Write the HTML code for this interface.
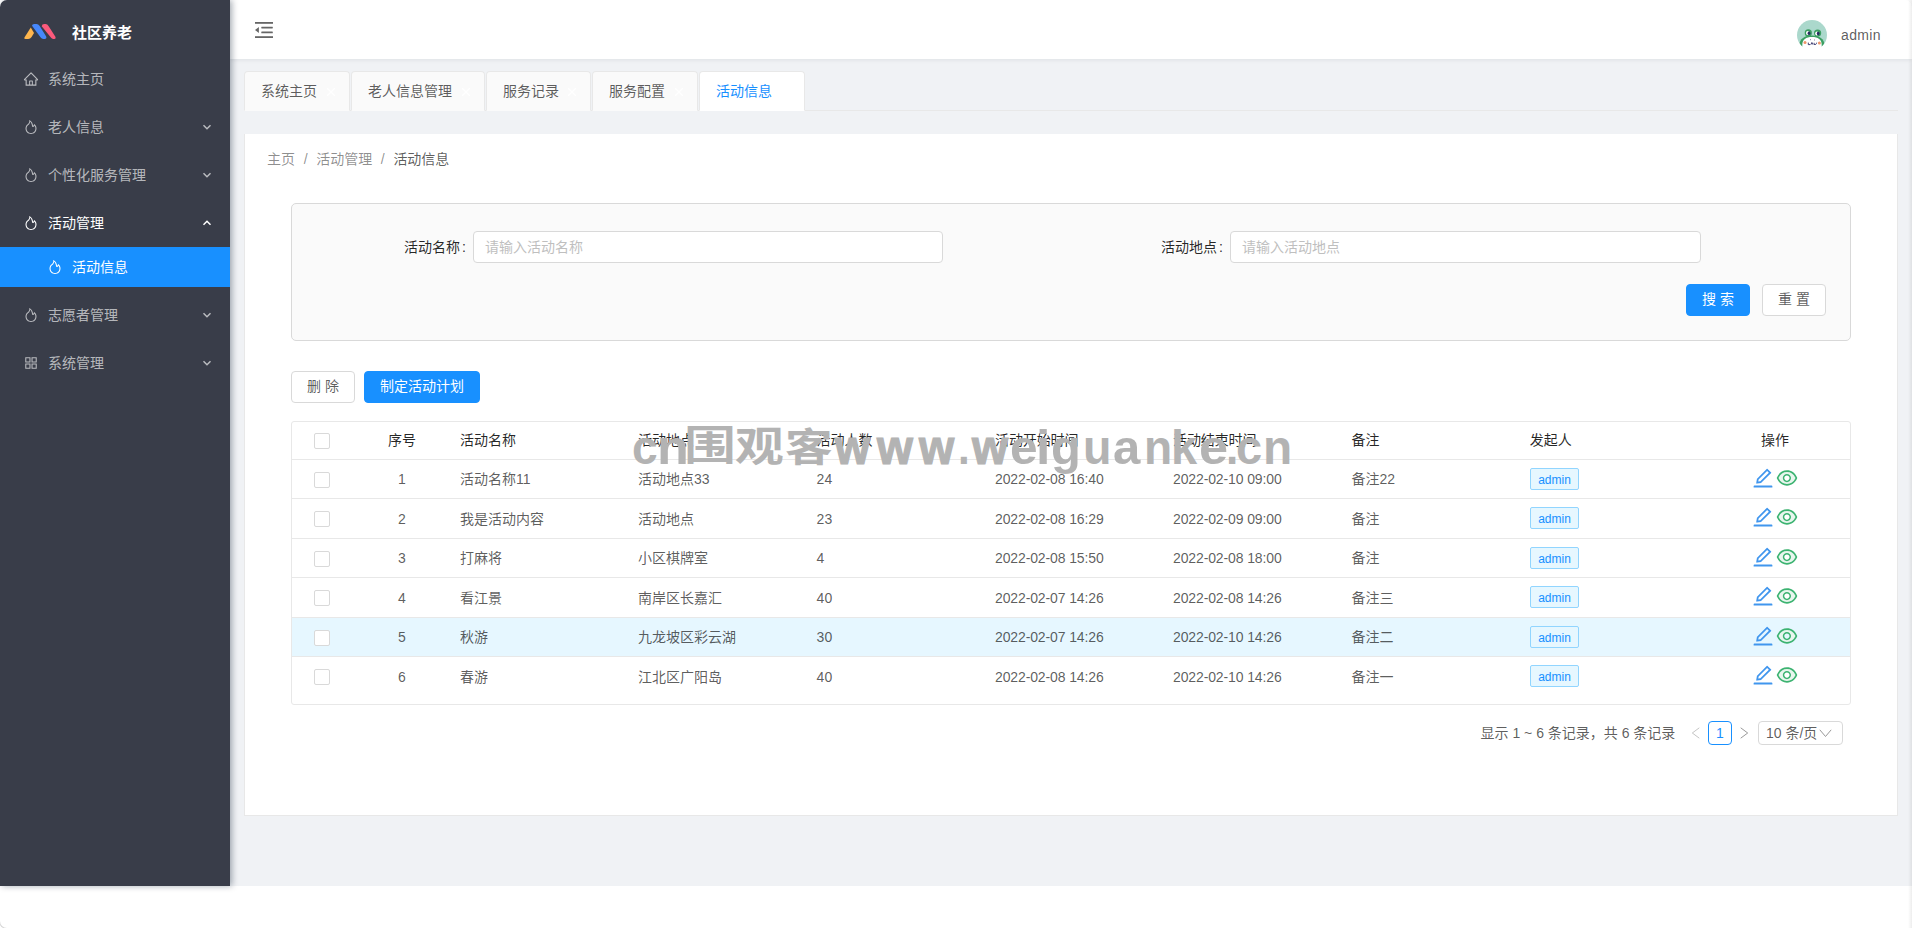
<!DOCTYPE html>
<html lang="zh-CN">
<head>
<meta charset="utf-8">
<title>社区养老</title>
<style>
*{box-sizing:border-box;margin:0;padding:0}
html,body{width:1912px;height:928px;overflow:hidden;background:#fff}
body{position:relative;font-family:"Liberation Sans","Noto Sans CJK SC",sans-serif;font-size:14px;color:rgba(0,0,0,.65);line-height:1.5}
.abs{position:absolute}
/* ---------- sidebar ---------- */
#side{position:absolute;left:0;top:0;width:230px;height:886px;background:#393d49;border-top-left-radius:7px;box-shadow:2px 0 6px rgba(0,21,41,.35);z-index:5}
#logo{position:absolute;left:0;top:0;width:230px;height:59px}
#logo svg{position:absolute;left:23px;top:22px}
#logo h1{position:absolute;left:72px;top:22px;font-size:15px;line-height:22px;font-weight:700;color:#fff;white-space:nowrap}
.mi{position:absolute;left:0;width:230px;height:40px;line-height:40px;color:rgba(255,255,255,.65);white-space:nowrap}
.mi .ic{position:absolute;left:22.600px;top:12px;width:16px;height:16px}
.mi .tx{position:absolute;left:48px;top:0}
.mi .ar{position:absolute;left:201px;top:14px;width:12px;height:12px}
.mi.on{color:#fff}
.mi.sel{background:#1890ff;color:#fff}
.mi.sel .ic{left:46.600px}
.mi.sel .tx{left:72px}
/* ---------- header ---------- */
#hdr{position:absolute;left:230px;top:0;width:1682px;height:59px;background:#fff;box-shadow:0 1px 4px rgba(0,21,41,.08);z-index:3;border-top-right-radius:7px}
#fold{position:absolute;left:25px;top:22px}
#ava{position:absolute;left:1567px;top:20px;width:30px;height:30px;overflow:visible}
#uname{position:absolute;left:1611px;top:24px;line-height:22px;letter-spacing:.35px;color:rgba(0,0,0,.65)}
/* ---------- main ---------- */
#main{position:absolute;left:230px;top:59px;width:1682px;height:827px;background:#f0f2f5}
#tabline{position:absolute;left:14px;top:51px;width:1654px;height:1px;background:#e8e8e8}
.tab{position:absolute;top:12px;height:40px;line-height:38px;background:#fafafa;border:1px solid #e8e8e8;border-bottom-color:#fafafa;border-radius:4px 4px 0 0;padding-left:16px;color:rgba(0,0,0,.65);white-space:nowrap}
.tab i{position:absolute;top:14px;width:12px;height:12px}
.tab i svg{display:block}
.tab.act{background:#fff;color:#1890ff;border-bottom-color:#fff}
#card{position:absolute;left:14px;top:75px;width:1654px;height:682px;background:#fff;border:1px solid #e8e8e8;border-top:0}

#pg{position:absolute;left:-245px;top:-134px;width:1912px;height:928px}
#pg>*{position:absolute}
#bc{left:267px;top:148px;line-height:22px;white-space:nowrap;color:rgba(0,0,0,.45)}
#bc b{font-weight:400;color:rgba(0,0,0,.65)}
#bc s{text-decoration:none;display:inline-block;width:21.200px;text-align:center;color:rgba(0,0,0,.45)}
#sbox{left:291px;top:203px;width:1560px;height:138px;background:#fafafa;border:1px solid #d9d9d9;border-radius:5px}
.lbl{top:231px;height:32px;line-height:32px;color:rgba(0,0,0,.85);text-align:right;white-space:nowrap}
.lbl u{text-decoration:none;margin-left:2px}
.inp{top:231px;height:32px;line-height:30px;border:1px solid #d9d9d9;border-radius:4px;background:#fff;padding-left:11px;color:#bfbfbf;white-space:nowrap}
.btn{height:32px;line-height:28px;border:1px solid #d9d9d9;border-radius:4px;background:#fff;text-align:center;color:rgba(0,0,0,.65);white-space:nowrap}
.btn.pri{background:#1890ff;border-color:#1890ff;color:#fff}
#tbl{left:291px;top:421px;width:1560px;height:284px;border:1px solid #e8e8e8;border-radius:3px;background:#fff}
.hl{left:292px;width:1558px;height:1px;background:#e8e8e8}
.row{left:292px;width:1558px;height:38px;line-height:38px;white-space:nowrap;color:rgba(0,0,0,.65)}
.row>*{position:absolute;top:0}
.row.hd{color:rgba(0,0,0,.85)}
.row .cb{top:12px !important}
.row.hd .cb{top:11px !important}
.cb{left:22px;width:16px;height:16px;border:1px solid #d9d9d9;border-radius:2px;background:#fff}
.c0{left:60px;width:100px;text-align:center}
.c1{left:168px}.c2{left:346px}.c3{left:524.600px}.c4{left:703px;letter-spacing:-.120px}.c5{left:881px;letter-spacing:-.120px}.c6{left:1059.400px}.c7{left:1237.700px}
.c8{left:1408px;width:150px;text-align:center}
.tag{top:8px !important;height:22px;line-height:22px;padding:0 7.500px;font-size:12px;color:#1890ff;background:#e6f7ff;border:1px solid #91d5ff;border-radius:2px}
.act svg{position:absolute;top:6px}
#wm{left:0;top:0;width:0;height:0;z-index:4}
#wm span{position:absolute;display:block;line-height:1;font-weight:700;color:#b3b3b3;white-space:nowrap;transform-origin:0 0}
#pgn>*{position:absolute}
</style>
</head>
<body>
<div id="main">
  <div id="tabline"></div>
  <div class="tab" style="left:14px;width:106px">系统主页<i style="left:80px"><svg width="12" height="12" viewBox="0 0 12 12"><path d="M2.2 2.2l7.6 7.6M9.8 2.2l-7.6 7.6" stroke="#ffffff" stroke-width="1.300" fill="none"/></svg></i></div>
  <div class="tab" style="left:121px;width:134px">老人信息管理<i style="left:108px"><svg width="12" height="12" viewBox="0 0 12 12"><path d="M2.2 2.2l7.6 7.6M9.8 2.2l-7.6 7.6" stroke="#ffffff" stroke-width="1.300" fill="none"/></svg></i></div>
  <div class="tab" style="left:256px;width:105px">服务记录<i style="left:79px"><svg width="12" height="12" viewBox="0 0 12 12"><path d="M2.2 2.2l7.6 7.6M9.8 2.2l-7.6 7.6" stroke="#ffffff" stroke-width="1.300" fill="none"/></svg></i></div>
  <div class="tab" style="left:362px;width:106px">服务配置<i style="left:80px"><svg width="12" height="12" viewBox="0 0 12 12"><path d="M2.2 2.2l7.6 7.6M9.8 2.2l-7.6 7.6" stroke="#ffffff" stroke-width="1.300" fill="none"/></svg></i></div>
  <div class="tab act" style="left:469px;width:106px">活动信息</div>
  <div id="card">
<div id="pg">
<div id="bc">主页<s>/</s>活动管理<s>/</s><b>活动信息</b></div>
<div id="sbox"></div>
<div class="lbl" style="left:366px;width:100px">活动名称<u>:</u></div><div class="inp" style="left:473px;width:470px">请输入活动名称</div>
<div class="lbl" style="left:1123px;width:100px">活动地点<u>:</u></div><div class="inp" style="left:1230px;width:471px">请输入活动地点</div>
<div class="btn pri" style="left:1686px;top:284px;width:64px">搜 索</div><div class="btn" style="left:1762px;top:284px;width:64px">重 置</div>
<div class="btn" style="left:291px;top:371px;width:64px">删 除</div><div class="btn pri" style="left:364px;top:371px;width:116px">制定活动计划</div>
<div id="tbl"></div>
<div class="row hd" style="top:422px;height:37px;line-height:37px"><i class="cb"></i><span class="c0">序号</span><span class="c1">活动名称</span><span class="c2">活动地点</span><span class="c3">活动人数</span><span class="c4">活动开始时间</span><span class="c5">活动结束时间</span><span class="c6">备注</span><span class="c7">发起人</span><span class="c8">操作</span></div>
<div class="hl" style="top:459px"></div><div class="row" style="top:460px;height:38px;line-height:38px"><i class="cb"></i><span class="c0">1</span><span class="c1">活动名称11</span><span class="c2">活动地点33</span><span class="c3">24</span><span class="c4">2022-02-08 16:40</span><span class="c5">2022-02-10 09:00</span><span class="c6">备注22</span><span class="c7 tag">admin</span><span class="c8 act"><svg width="24" height="24" viewBox="0 0 1024 1024" style="left:51px"><path fill="#4096ee" d="M257.700 752c2 0 4-.2 6-.5L431.900 722c2-.4 3.900-1.300 5.300-2.800l423.900-423.900a9.960 9.960 0 0 0 0-14.100L694.900 114.900c-1.900-1.900-4.400-2.900-7.100-2.900s-5.200 1-7.100 2.900L256.800 538.800c-1.500 1.500-2.400 3.300-2.800 5.300l-29.500 168.200a33.500 33.500 0 0 0 9.400 29.800c6.600 6.400 14.900 9.900 23.800 9.900zm67.400-174.400L687.800 215l73.300 73.300-362.700 362.600-88.900 15.700 15.600-89zM880 836H144c-17.700 0-32 14.300-32 32v36c0 4.400 3.600 8 8 8h784c4.400 0 8-3.600 8-8v-36c0-17.700-14.300-32-32-32z"/></svg><svg width="24" height="24" viewBox="0 0 1024 1024" style="left:75px"><path fill="#e8f6ee" d="M512 258c-161.300 0-279.400 81.800-362.700 254C232.600 684.200 350.700 766 512 766c161.400 0 279.500-81.800 362.700-254C791.400 339.800 673.300 258 512 258zm-4 430c-97.200 0-176-78.800-176-176s78.800-176 176-176 176 78.800 176 176-78.800 176-176 176z"/><path fill="#3cb371" d="M942.200 486.200C847.400 286.500 704.100 186 512 186c-192.200 0-335.400 100.500-430.200 300.300a60.300 60.300 0 0 0 0 51.500C176.600 737.500 319.900 838 512 838c192.200 0 335.400-100.500 430.200-300.300 7.700-16.200 7.700-35 0-51.500zM512 766c-161.300 0-279.400-81.800-362.700-254C232.600 339.800 350.700 258 512 258s279.400 81.800 362.700 254C791.500 684.200 673.400 766 512 766z"/><path fill="#3cb371" d="M508 336c-97.200 0-176 78.800-176 176s78.800 176 176 176 176-78.800 176-176-78.800-176-176-176zm0 288c-61.900 0-112-50.100-112-112s50.100-112 112-112 112 50.100 112 112-50.100 112-112 112z"/></svg></span></div>
<div class="hl" style="top:498px"></div><div class="row" style="top:499px;height:39px;line-height:40px"><i class="cb"></i><span class="c0">2</span><span class="c1">我是活动内容</span><span class="c2">活动地点</span><span class="c3">23</span><span class="c4">2022-02-08 16:29</span><span class="c5">2022-02-09 09:00</span><span class="c6">备注</span><span class="c7 tag">admin</span><span class="c8 act"><svg width="24" height="24" viewBox="0 0 1024 1024" style="left:51px"><path fill="#4096ee" d="M257.700 752c2 0 4-.2 6-.5L431.900 722c2-.4 3.900-1.300 5.300-2.800l423.900-423.900a9.960 9.960 0 0 0 0-14.100L694.900 114.900c-1.900-1.900-4.400-2.900-7.100-2.900s-5.200 1-7.100 2.900L256.800 538.800c-1.500 1.500-2.400 3.300-2.800 5.300l-29.500 168.200a33.500 33.500 0 0 0 9.400 29.800c6.600 6.400 14.900 9.900 23.800 9.900zm67.400-174.400L687.800 215l73.300 73.300-362.700 362.600-88.900 15.700 15.600-89zM880 836H144c-17.700 0-32 14.300-32 32v36c0 4.400 3.600 8 8 8h784c4.400 0 8-3.600 8-8v-36c0-17.700-14.300-32-32-32z"/></svg><svg width="24" height="24" viewBox="0 0 1024 1024" style="left:75px"><path fill="#e8f6ee" d="M512 258c-161.300 0-279.400 81.800-362.700 254C232.600 684.200 350.700 766 512 766c161.400 0 279.500-81.800 362.700-254C791.400 339.800 673.300 258 512 258zm-4 430c-97.200 0-176-78.800-176-176s78.800-176 176-176 176 78.800 176 176-78.800 176-176 176z"/><path fill="#3cb371" d="M942.200 486.200C847.400 286.500 704.100 186 512 186c-192.200 0-335.400 100.500-430.200 300.300a60.300 60.300 0 0 0 0 51.500C176.600 737.500 319.900 838 512 838c192.200 0 335.400-100.500 430.200-300.300 7.700-16.200 7.700-35 0-51.500zM512 766c-161.300 0-279.400-81.800-362.700-254C232.600 339.800 350.700 258 512 258s279.400 81.800 362.700 254C791.500 684.200 673.400 766 512 766z"/><path fill="#3cb371" d="M508 336c-97.200 0-176 78.800-176 176s78.800 176 176 176 176-78.800 176-176-78.800-176-176-176zm0 288c-61.900 0-112-50.100-112-112s50.100-112 112-112 112 50.100 112 112-50.100 112-112 112z"/></svg></span></div>
<div class="hl" style="top:538px"></div><div class="row" style="top:539px;height:38px;line-height:38px"><i class="cb"></i><span class="c0">3</span><span class="c1">打麻将</span><span class="c2">小区棋牌室</span><span class="c3">4</span><span class="c4">2022-02-08 15:50</span><span class="c5">2022-02-08 18:00</span><span class="c6">备注</span><span class="c7 tag">admin</span><span class="c8 act"><svg width="24" height="24" viewBox="0 0 1024 1024" style="left:51px"><path fill="#4096ee" d="M257.700 752c2 0 4-.2 6-.5L431.900 722c2-.4 3.900-1.300 5.300-2.800l423.900-423.900a9.960 9.960 0 0 0 0-14.100L694.900 114.900c-1.900-1.900-4.400-2.900-7.100-2.900s-5.200 1-7.100 2.900L256.800 538.800c-1.500 1.500-2.400 3.300-2.800 5.300l-29.500 168.200a33.500 33.500 0 0 0 9.400 29.800c6.600 6.400 14.900 9.900 23.800 9.900zm67.400-174.400L687.800 215l73.300 73.300-362.700 362.600-88.900 15.700 15.600-89zM880 836H144c-17.700 0-32 14.300-32 32v36c0 4.400 3.600 8 8 8h784c4.400 0 8-3.600 8-8v-36c0-17.700-14.300-32-32-32z"/></svg><svg width="24" height="24" viewBox="0 0 1024 1024" style="left:75px"><path fill="#e8f6ee" d="M512 258c-161.300 0-279.400 81.800-362.700 254C232.600 684.200 350.700 766 512 766c161.400 0 279.500-81.800 362.700-254C791.400 339.800 673.300 258 512 258zm-4 430c-97.200 0-176-78.800-176-176s78.800-176 176-176 176 78.800 176 176-78.800 176-176 176z"/><path fill="#3cb371" d="M942.200 486.200C847.400 286.500 704.100 186 512 186c-192.200 0-335.400 100.500-430.200 300.300a60.300 60.300 0 0 0 0 51.500C176.600 737.500 319.900 838 512 838c192.200 0 335.400-100.500 430.200-300.300 7.700-16.200 7.700-35 0-51.500zM512 766c-161.300 0-279.400-81.800-362.700-254C232.600 339.800 350.700 258 512 258s279.400 81.800 362.700 254C791.500 684.200 673.400 766 512 766z"/><path fill="#3cb371" d="M508 336c-97.200 0-176 78.800-176 176s78.800 176 176 176 176-78.800 176-176-78.800-176-176-176zm0 288c-61.900 0-112-50.100-112-112s50.100-112 112-112 112 50.100 112 112-50.100 112-112 112z"/></svg></span></div>
<div class="hl" style="top:577px"></div><div class="row" style="top:578px;height:39px;line-height:40px"><i class="cb"></i><span class="c0">4</span><span class="c1">看江景</span><span class="c2">南岸区长嘉汇</span><span class="c3">40</span><span class="c4">2022-02-07 14:26</span><span class="c5">2022-02-08 14:26</span><span class="c6">备注三</span><span class="c7 tag">admin</span><span class="c8 act"><svg width="24" height="24" viewBox="0 0 1024 1024" style="left:51px"><path fill="#4096ee" d="M257.700 752c2 0 4-.2 6-.5L431.900 722c2-.4 3.900-1.300 5.300-2.800l423.900-423.900a9.960 9.960 0 0 0 0-14.100L694.900 114.900c-1.900-1.900-4.400-2.900-7.100-2.900s-5.200 1-7.100 2.900L256.800 538.800c-1.500 1.500-2.400 3.300-2.800 5.300l-29.500 168.200a33.500 33.500 0 0 0 9.400 29.800c6.600 6.400 14.900 9.900 23.800 9.900zm67.400-174.400L687.800 215l73.300 73.300-362.700 362.600-88.900 15.700 15.600-89zM880 836H144c-17.700 0-32 14.300-32 32v36c0 4.400 3.600 8 8 8h784c4.400 0 8-3.600 8-8v-36c0-17.700-14.300-32-32-32z"/></svg><svg width="24" height="24" viewBox="0 0 1024 1024" style="left:75px"><path fill="#e8f6ee" d="M512 258c-161.300 0-279.400 81.800-362.700 254C232.600 684.200 350.700 766 512 766c161.400 0 279.500-81.800 362.700-254C791.400 339.800 673.300 258 512 258zm-4 430c-97.200 0-176-78.800-176-176s78.800-176 176-176 176 78.800 176 176-78.800 176-176 176z"/><path fill="#3cb371" d="M942.200 486.200C847.400 286.500 704.100 186 512 186c-192.200 0-335.400 100.500-430.200 300.300a60.300 60.300 0 0 0 0 51.500C176.600 737.500 319.900 838 512 838c192.200 0 335.400-100.500 430.200-300.300 7.700-16.200 7.700-35 0-51.500zM512 766c-161.300 0-279.400-81.800-362.700-254C232.600 339.800 350.700 258 512 258s279.400 81.800 362.700 254C791.500 684.200 673.400 766 512 766z"/><path fill="#3cb371" d="M508 336c-97.200 0-176 78.800-176 176s78.800 176 176 176 176-78.800 176-176-78.800-176-176-176zm0 288c-61.900 0-112-50.100-112-112s50.100-112 112-112 112 50.100 112 112-50.100 112-112 112z"/></svg></span></div>
<div class="hl" style="top:617px"></div><div class="row" style="top:618px;height:38px;line-height:38px;background:#e6f7ff"><i class="cb"></i><span class="c0">5</span><span class="c1">秋游</span><span class="c2">九龙坡区彩云湖</span><span class="c3">30</span><span class="c4">2022-02-07 14:26</span><span class="c5">2022-02-10 14:26</span><span class="c6">备注二</span><span class="c7 tag">admin</span><span class="c8 act"><svg width="24" height="24" viewBox="0 0 1024 1024" style="left:51px"><path fill="#4096ee" d="M257.700 752c2 0 4-.2 6-.5L431.900 722c2-.4 3.900-1.300 5.300-2.800l423.900-423.900a9.960 9.960 0 0 0 0-14.100L694.900 114.900c-1.900-1.900-4.400-2.900-7.100-2.900s-5.200 1-7.100 2.900L256.800 538.800c-1.500 1.500-2.400 3.300-2.800 5.300l-29.500 168.200a33.500 33.500 0 0 0 9.400 29.800c6.600 6.400 14.900 9.900 23.800 9.900zm67.400-174.400L687.800 215l73.300 73.300-362.700 362.600-88.900 15.700 15.600-89zM880 836H144c-17.700 0-32 14.300-32 32v36c0 4.400 3.600 8 8 8h784c4.400 0 8-3.600 8-8v-36c0-17.700-14.300-32-32-32z"/></svg><svg width="24" height="24" viewBox="0 0 1024 1024" style="left:75px"><path fill="#e8f6ee" d="M512 258c-161.300 0-279.400 81.800-362.700 254C232.600 684.200 350.700 766 512 766c161.400 0 279.500-81.800 362.700-254C791.400 339.800 673.300 258 512 258zm-4 430c-97.200 0-176-78.800-176-176s78.800-176 176-176 176 78.800 176 176-78.800 176-176 176z"/><path fill="#3cb371" d="M942.200 486.200C847.400 286.500 704.100 186 512 186c-192.200 0-335.400 100.500-430.200 300.300a60.300 60.300 0 0 0 0 51.500C176.600 737.500 319.900 838 512 838c192.200 0 335.400-100.500 430.200-300.300 7.700-16.200 7.700-35 0-51.500zM512 766c-161.300 0-279.400-81.800-362.700-254C232.600 339.800 350.700 258 512 258s279.400 81.800 362.700 254C791.500 684.200 673.400 766 512 766z"/><path fill="#3cb371" d="M508 336c-97.200 0-176 78.800-176 176s78.800 176 176 176 176-78.800 176-176-78.800-176-176-176zm0 288c-61.900 0-112-50.100-112-112s50.100-112 112-112 112 50.100 112 112-50.100 112-112 112z"/></svg></span></div>
<div class="hl" style="top:656px"></div><div class="row" style="top:657px;height:39px;line-height:40px"><i class="cb"></i><span class="c0">6</span><span class="c1">春游</span><span class="c2">江北区广阳岛</span><span class="c3">40</span><span class="c4">2022-02-08 14:26</span><span class="c5">2022-02-10 14:26</span><span class="c6">备注一</span><span class="c7 tag">admin</span><span class="c8 act"><svg width="24" height="24" viewBox="0 0 1024 1024" style="left:51px"><path fill="#4096ee" d="M257.700 752c2 0 4-.2 6-.5L431.900 722c2-.4 3.900-1.300 5.300-2.800l423.900-423.900a9.960 9.960 0 0 0 0-14.100L694.900 114.900c-1.900-1.900-4.400-2.900-7.100-2.900s-5.200 1-7.100 2.900L256.800 538.800c-1.500 1.500-2.400 3.300-2.800 5.300l-29.500 168.200a33.500 33.500 0 0 0 9.400 29.800c6.600 6.400 14.900 9.900 23.800 9.900zm67.400-174.400L687.800 215l73.300 73.300-362.700 362.600-88.900 15.700 15.600-89zM880 836H144c-17.700 0-32 14.300-32 32v36c0 4.400 3.600 8 8 8h784c4.400 0 8-3.600 8-8v-36c0-17.700-14.300-32-32-32z"/></svg><svg width="24" height="24" viewBox="0 0 1024 1024" style="left:75px"><path fill="#e8f6ee" d="M512 258c-161.300 0-279.400 81.800-362.700 254C232.600 684.200 350.700 766 512 766c161.400 0 279.500-81.800 362.700-254C791.400 339.800 673.300 258 512 258zm-4 430c-97.200 0-176-78.800-176-176s78.800-176 176-176 176 78.800 176 176-78.800 176-176 176z"/><path fill="#3cb371" d="M942.200 486.200C847.400 286.500 704.100 186 512 186c-192.200 0-335.400 100.500-430.200 300.300a60.300 60.300 0 0 0 0 51.500C176.600 737.500 319.900 838 512 838c192.200 0 335.400-100.500 430.200-300.300 7.700-16.200 7.700-35 0-51.500zM512 766c-161.300 0-279.400-81.800-362.700-254C232.600 339.800 350.700 258 512 258s279.400 81.800 362.700 254C791.500 684.200 673.400 766 512 766z"/><path fill="#3cb371" d="M508 336c-97.200 0-176 78.800-176 176s78.800 176 176 176 176-78.800 176-176-78.800-176-176-176zm0 288c-61.900 0-112-50.100-112-112s50.100-112 112-112 112 50.100 112 112-50.100 112-112 112z"/></svg></span></div>
<div id="wm"><span style="left:631.8px;top:423.8px;font-size:47.4px;transform:scale(0.974,1.000)">c</span><span style="left:657.3px;top:423.8px;font-size:47.4px;transform:scale(1.101,1.000)">n</span><span style="left:684.4px;top:426.1px;font-size:40px;transform:scale(1.297,1.014)">围</span><span style="left:735.0px;top:425.5px;font-size:40px;transform:scale(1.220,1.031)">观</span><span style="left:784.6px;top:427.9px;font-size:40px;transform:scale(1.190,0.966)">客</span><span style="left:835.0px;top:423.8px;font-size:47.4px;transform:scale(0.947,1.000);-webkit-text-stroke:1.200px #b3b3b3">w</span><span style="left:877.0px;top:423.8px;font-size:47.4px;transform:scale(0.974,1.000);-webkit-text-stroke:1.200px #b3b3b3">w</span><span style="left:919.0px;top:423.8px;font-size:47.4px;transform:scale(0.955,1.000);-webkit-text-stroke:1.200px #b3b3b3">w</span><span style="left:957.8px;top:423.8px;font-size:47.4px;transform:scale(0.889,1.000)">.</span><span style="left:971.7px;top:423.8px;font-size:47.4px;transform:scale(0.974,1.000);-webkit-text-stroke:1.200px #b3b3b3">w</span><span style="left:1009.5px;top:423.8px;font-size:47.4px;transform:scale(1.046,1.000)">e</span><span style="left:1036.4px;top:423.8px;font-size:47.4px;transform:scale(1.094,1.000)">i</span><span style="left:1051.3px;top:423.8px;font-size:47.4px;transform:scale(1.032,1.000)">g</span><span style="left:1082.7px;top:423.8px;font-size:47.4px;transform:scale(0.983,1.000)">u</span><span style="left:1112.5px;top:423.8px;font-size:47.4px;transform:scale(1.035,1.000)">a</span><span style="left:1143.6px;top:423.8px;font-size:47.4px;transform:scale(0.974,1.000)">n</span><span style="left:1170.7px;top:423.8px;font-size:47.4px;transform:scale(0.992,1.000)">k</span><span style="left:1198.5px;top:423.8px;font-size:47.4px;transform:scale(1.103,1.000)">e</span><span style="left:1225.7px;top:423.8px;font-size:47.4px;transform:scale(0.934,1.000)">.</span><span style="left:1236.1px;top:423.8px;font-size:47.4px;transform:scale(0.992,1.000)">c</span><span style="left:1262.7px;top:423.8px;font-size:47.4px;transform:scale(1.009,1.000)">n</span></div>
<div id="pgn" style="left:0;top:721px;width:1912px;height:24px;line-height:24px;white-space:nowrap"><span style="left:1480.500px;color:rgba(0,0,0,.65)">显示 1 ~ 6 条记录，共 6 条记录</span><svg style="left:1690px;top:6px" width="12" height="12" viewBox="0 0 12 12"><path d="M9.300 .8L2.300 6l7 5.200" fill="none" stroke="#c4c4c4" stroke-width="1"/></svg><span style="left:1708px;width:24px;height:24px;line-height:22px;border:1px solid #1890ff;border-radius:4px;text-align:center;color:#1890ff;background:#fff">1</span><svg style="left:1738px;top:6px" width="12" height="12" viewBox="0 0 12 12"><path d="M2.700 .8l7 5.200-7 5.200" fill="none" stroke="#999" stroke-width="1"/></svg><span style="left:1758px;width:85px;height:24px;line-height:22px;border:1px solid #d9d9d9;border-radius:4px;padding-left:7px;background:#fff;color:rgba(0,0,0,.65)">10 条/页</span><svg style="left:1819px;top:6px" width="13" height="12" viewBox="0 0 13 12"><path d="M.8 2.800l5.700 6.700 5.700-6.700" fill="none" stroke="#999" stroke-width="1"/></svg></div>
</div>
  </div>
</div>

<div id="hdr">
  <svg id="fold" width="18" height="16" viewBox="0 0 18 16"><g fill="#666"><rect x="0" y="0" width="18" height="1.8"/><rect x="0" y="14.2" width="18" height="1.8"/><rect x="6.3" y="4.7" width="11.5" height="1.7" rx=".4"/><rect x="6.3" y="9.6" width="11.5" height="1.7" rx=".4"/><path d="M0 8l3.9-3v6z"/></g></svg>
  <svg id="ava" viewBox="0 0 30 30"><defs><clipPath id="avc"><circle cx="15" cy="15" r="15"/></clipPath></defs><circle cx="15" cy="15" r="15" fill="#abd8cc"/><g clip-path="url(#avc)"><path d="M2.300 30V25.500C2.300 18.500 8 15.400 15 15.400S27.500 18.500 27.500 25.500V30z" fill="#3c9f62"/><circle cx="11.300" cy="12.900" r="3.600" fill="#3c9f62"/><circle cx="20.600" cy="13" r="3.600" fill="#3c9f62"/><ellipse cx="10.700" cy="13.100" rx="1.700" ry="2" fill="#fff"/><ellipse cx="19.900" cy="13.400" rx="1.700" ry="2" fill="#fff"/><ellipse cx="12" cy="13.200" rx="1.400" ry="1.800" fill="#2a2a63"/><ellipse cx="21.200" cy="13.600" rx="1.400" ry="1.800" fill="#2a2a63"/></g><path d="M5.300 30.400V25C5.300 19.500 9 17.100 15 17.100S24.700 19.500 24.700 25V30.400z" fill="#fff"/><circle cx="8" cy="22.600" r="1.500" fill="#f0956a"/><circle cx="22.400" cy="22.900" r="1.500" fill="#f0956a"/><path d="M11.300 22.600v2h1.900M13.900 24.600l1-2.100 1 2.100M17.100 22.800v1.600c1.400.6 2.400-.2 2.500-1.700" stroke="#2a2a63" stroke-width=".9" fill="none"/><path d="M13.200 19.700h.8M17 20h.8" stroke="#2a2a63" stroke-width=".7"/></svg>
  <span id="uname">admin</span>
</div>

<div id="blc" style="position:absolute;left:-1px;top:910px;width:20px;height:19px;border:1px solid #d8d8d8;border-top:0;border-right:0;border-bottom-left-radius:8px;z-index:9"></div>
<div id="redge" style="position:absolute;right:0;top:0;width:4px;height:928px;background:linear-gradient(to right,rgba(0,0,0,0),rgba(0,0,0,.07));z-index:9"></div>
<div id="side">
  <div id="logo">
    <svg width="34" height="17" viewBox="23 22 34 17"><path d="M30.800 27.500l3.200 5.400-2.600 4.300Q30.300 39 28.200 39H25.500Q23.600 39 24.600 37.300z" fill="#ffb64d"/><path d="M32 25.800Q32.200 24 34.200 24H36.600Q38.400 24 39.500 25.800L46.200 36.400Q47.200 38.300 45.200 38.900H43.300Q41.600 38.900 40.700 37.500Z" fill="#4788fb"/><path d="M41.700 26.200Q42 24 44.300 24h1.300q1.800 0 2.900 1.900l6.900 10.800Q56.500 38.400 54.500 39h-1.300q-1.500 0-2.300-1.400z" fill="#fb5a7c"/></svg>
    <h1>社区养老</h1>
  </div>
  <div class="mi" style="top:59px"><svg class="ic" viewBox="0 0 1024 1024"><path fill="currentColor" d="M946.5 505L560.1 118.8l-25.900-25.900a31.500 31.500 0 0 0-44.400 0L77.500 505a63.900 63.900 0 0 0-18.800 46c.4 35.200 29.700 63.300 64.900 63.300h42.500V940h691.800V614.300h43.400c17.100 0 33.200-6.700 45.300-18.800a63.600 63.600 0 0 0 18.700-45.300c0-17-6.700-33.100-18.800-45.200zM568 868H456V664h112v204zm217.900-325.700V868H632V640c0-22.100-17.900-40-40-40H432c-22.100 0-40 17.900-40 40v228H238.100V542.300h-96l370-369.700 23.100 23.100L882 542.300h-96.100z"/></svg><span class="tx">系统主页</span></div>
  <div class="mi" style="top:107px"><svg class="ic" viewBox="0 0 1024 1024"><path fill="currentColor" d="M834.1 469.2A347.49 347.49 0 0 0 751.2 354l-29.100-26.700a8.090 8.090 0 0 0-13 3.300l-13 37.300c-8.100 23.400-23 47.300-44.100 70.800-1.400 1.500-3 1.900-4.100 2-1.100.1-2.800-.1-4.300-1.500-1.400-1.200-2.100-3-2-4.800 3.700-60.200-14.300-128.100-53.700-202C555.300 171 510 123.100 453.400 89.700l-41.300-24.300c-5.400-3.200-12.300 1-12 7.300l2.200 48c1.500 32.800-2.300 61.800-11.300 85.900-11 29.500-26.800 56.900-47 81.500a295.640 295.640 0 0 1-47.500 46.100 352.600 352.600 0 0 0-100.300 121.500A347.750 347.750 0 0 0 160 610c0 47.200 9.300 92.900 27.700 136a349.400 349.400 0 0 0 75.500 110.900c32.400 32 70 57.200 111.900 74.700C418.500 949.800 464.500 959 512 959s93.500-9.200 136.900-27.300A348.600 348.600 0 0 0 760.800 857c32.400-32 57.800-69.400 75.500-110.900a344.200 344.200 0 0 0 27.700-136c0-48.800-10-96.200-29.900-140.900zM713 808.500c-53.700 53.200-125 82.400-201 82.400s-147.300-29.200-201-82.400c-53.500-53.100-83-123.500-83-198.400 0-43.500 9.800-85.200 29.100-124 18.800-37.900 46.800-71.800 80.800-97.900a349.600 349.600 0 0 0 58.600-56.800c25-30.500 44.600-64.500 58.200-101a240 240 0 0 0 12.100-46.500c24.100 22.200 44.300 49 61.200 80.400 33.400 62.600 48.800 118.300 45.800 165.700a74.010 74.010 0 0 0 24.400 59.800 73.360 73.360 0 0 0 53.400 18.800c19.700-1 37.800-9.700 51-24.400 13.300-14.900 24.800-30.100 34.400-45.600 14 17.900 25.700 37.400 35 58.400 15.900 35.800 24 73.900 24 113.100 0 74.900-29.500 145.400-83 198.400z"/></svg><span class="tx">老人信息</span><svg class="ar" viewBox="0 0 12 12"><path d="M2.500 4.300L6 7.700l3.500-3.400" fill="none" stroke="currentColor" stroke-width="1.500"/></svg></div>
  <div class="mi" style="top:155px"><svg class="ic" viewBox="0 0 1024 1024"><path fill="currentColor" d="M834.1 469.2A347.49 347.49 0 0 0 751.2 354l-29.100-26.700a8.090 8.090 0 0 0-13 3.300l-13 37.300c-8.100 23.400-23 47.300-44.100 70.800-1.400 1.500-3 1.900-4.100 2-1.100.1-2.800-.1-4.300-1.500-1.400-1.200-2.100-3-2-4.800 3.700-60.200-14.300-128.100-53.700-202C555.300 171 510 123.100 453.400 89.700l-41.300-24.300c-5.400-3.200-12.300 1-12 7.300l2.200 48c1.500 32.800-2.300 61.800-11.300 85.900-11 29.500-26.800 56.900-47 81.500a295.640 295.640 0 0 1-47.500 46.100 352.600 352.600 0 0 0-100.300 121.500A347.750 347.750 0 0 0 160 610c0 47.200 9.300 92.900 27.700 136a349.400 349.400 0 0 0 75.500 110.900c32.400 32 70 57.200 111.900 74.700C418.500 949.800 464.500 959 512 959s93.500-9.200 136.900-27.300A348.600 348.600 0 0 0 760.800 857c32.400-32 57.800-69.400 75.500-110.900a344.200 344.200 0 0 0 27.700-136c0-48.800-10-96.200-29.900-140.900zM713 808.500c-53.700 53.200-125 82.400-201 82.400s-147.300-29.200-201-82.400c-53.500-53.100-83-123.500-83-198.400 0-43.500 9.800-85.200 29.100-124 18.800-37.900 46.800-71.800 80.800-97.900a349.600 349.600 0 0 0 58.600-56.800c25-30.500 44.600-64.500 58.200-101a240 240 0 0 0 12.100-46.500c24.100 22.200 44.300 49 61.200 80.400 33.400 62.600 48.800 118.300 45.800 165.700a74.010 74.010 0 0 0 24.400 59.800 73.360 73.360 0 0 0 53.400 18.800c19.700-1 37.800-9.700 51-24.400 13.300-14.900 24.800-30.100 34.400-45.600 14 17.900 25.700 37.400 35 58.400 15.900 35.800 24 73.900 24 113.100 0 74.900-29.500 145.400-83 198.400z"/></svg><span class="tx">个性化服务管理</span><svg class="ar" viewBox="0 0 12 12"><path d="M2.500 4.300L6 7.700l3.500-3.400" fill="none" stroke="currentColor" stroke-width="1.500"/></svg></div>
  <div class="mi on" style="top:203px"><svg class="ic" viewBox="0 0 1024 1024"><path fill="currentColor" d="M834.1 469.2A347.49 347.49 0 0 0 751.2 354l-29.100-26.700a8.090 8.090 0 0 0-13 3.300l-13 37.300c-8.100 23.400-23 47.300-44.100 70.800-1.400 1.500-3 1.900-4.100 2-1.100.1-2.800-.1-4.300-1.500-1.400-1.200-2.100-3-2-4.800 3.700-60.200-14.300-128.100-53.700-202C555.300 171 510 123.100 453.400 89.700l-41.300-24.300c-5.400-3.200-12.300 1-12 7.300l2.200 48c1.500 32.800-2.300 61.800-11.300 85.900-11 29.500-26.800 56.900-47 81.500a295.640 295.640 0 0 1-47.500 46.100 352.600 352.600 0 0 0-100.300 121.500A347.750 347.750 0 0 0 160 610c0 47.200 9.300 92.900 27.700 136a349.400 349.400 0 0 0 75.500 110.900c32.400 32 70 57.200 111.900 74.700C418.500 949.800 464.500 959 512 959s93.500-9.200 136.900-27.300A348.600 348.600 0 0 0 760.800 857c32.400-32 57.800-69.400 75.500-110.900a344.200 344.200 0 0 0 27.700-136c0-48.800-10-96.200-29.900-140.900zM713 808.500c-53.700 53.200-125 82.400-201 82.400s-147.300-29.200-201-82.400c-53.500-53.100-83-123.500-83-198.400 0-43.500 9.800-85.200 29.100-124 18.800-37.900 46.800-71.800 80.800-97.900a349.600 349.600 0 0 0 58.600-56.800c25-30.500 44.600-64.500 58.200-101a240 240 0 0 0 12.100-46.500c24.100 22.200 44.300 49 61.200 80.400 33.400 62.600 48.800 118.300 45.800 165.700a74.010 74.010 0 0 0 24.400 59.800 73.360 73.360 0 0 0 53.400 18.800c19.700-1 37.800-9.700 51-24.400 13.300-14.900 24.800-30.100 34.400-45.600 14 17.900 25.700 37.400 35 58.400 15.900 35.800 24 73.900 24 113.100 0 74.900-29.500 145.400-83 198.400z"/></svg><span class="tx">活动管理</span><svg class="ar" viewBox="0 0 12 12"><path d="M2.500 7.700L6 4.300l3.500 3.400" fill="none" stroke="currentColor" stroke-width="1.500"/></svg></div>
  <div class="mi sel" style="top:247px"><svg class="ic" viewBox="0 0 1024 1024"><path fill="currentColor" d="M834.1 469.2A347.49 347.49 0 0 0 751.2 354l-29.100-26.700a8.090 8.090 0 0 0-13 3.300l-13 37.300c-8.100 23.400-23 47.300-44.100 70.800-1.400 1.500-3 1.900-4.100 2-1.100.1-2.800-.1-4.300-1.500-1.400-1.200-2.100-3-2-4.800 3.700-60.200-14.300-128.100-53.700-202C555.300 171 510 123.100 453.400 89.700l-41.300-24.300c-5.400-3.200-12.300 1-12 7.300l2.200 48c1.500 32.800-2.300 61.800-11.300 85.900-11 29.500-26.800 56.900-47 81.500a295.640 295.640 0 0 1-47.500 46.100 352.600 352.600 0 0 0-100.300 121.500A347.750 347.750 0 0 0 160 610c0 47.200 9.300 92.900 27.700 136a349.400 349.400 0 0 0 75.500 110.900c32.400 32 70 57.200 111.900 74.700C418.500 949.800 464.500 959 512 959s93.500-9.200 136.900-27.300A348.600 348.600 0 0 0 760.800 857c32.400-32 57.800-69.400 75.500-110.900a344.200 344.200 0 0 0 27.700-136c0-48.800-10-96.200-29.900-140.900zM713 808.500c-53.700 53.200-125 82.400-201 82.400s-147.300-29.200-201-82.400c-53.500-53.100-83-123.500-83-198.400 0-43.500 9.800-85.200 29.100-124 18.800-37.900 46.800-71.800 80.800-97.900a349.600 349.600 0 0 0 58.600-56.800c25-30.500 44.600-64.500 58.200-101a240 240 0 0 0 12.100-46.500c24.100 22.200 44.300 49 61.200 80.400 33.400 62.600 48.800 118.300 45.800 165.700a74.010 74.010 0 0 0 24.400 59.800 73.360 73.360 0 0 0 53.400 18.800c19.700-1 37.800-9.700 51-24.400 13.300-14.900 24.800-30.100 34.400-45.600 14 17.900 25.700 37.400 35 58.400 15.900 35.800 24 73.900 24 113.100 0 74.900-29.500 145.400-83 198.400z"/></svg><span class="tx">活动信息</span></div>
  <div class="mi" style="top:295px"><svg class="ic" viewBox="0 0 1024 1024"><path fill="currentColor" d="M834.1 469.2A347.49 347.49 0 0 0 751.2 354l-29.100-26.700a8.090 8.090 0 0 0-13 3.300l-13 37.300c-8.100 23.400-23 47.300-44.100 70.800-1.400 1.500-3 1.900-4.100 2-1.100.1-2.800-.1-4.300-1.500-1.400-1.200-2.100-3-2-4.800 3.700-60.200-14.300-128.100-53.700-202C555.300 171 510 123.100 453.400 89.700l-41.300-24.300c-5.400-3.200-12.300 1-12 7.300l2.200 48c1.500 32.800-2.300 61.800-11.300 85.900-11 29.500-26.800 56.900-47 81.500a295.640 295.640 0 0 1-47.500 46.100 352.600 352.600 0 0 0-100.300 121.500A347.750 347.750 0 0 0 160 610c0 47.200 9.300 92.900 27.700 136a349.400 349.400 0 0 0 75.500 110.900c32.400 32 70 57.200 111.900 74.700C418.500 949.800 464.500 959 512 959s93.500-9.200 136.900-27.300A348.600 348.600 0 0 0 760.800 857c32.400-32 57.800-69.400 75.500-110.900a344.200 344.200 0 0 0 27.700-136c0-48.800-10-96.200-29.900-140.900zM713 808.500c-53.700 53.200-125 82.400-201 82.400s-147.300-29.200-201-82.400c-53.500-53.100-83-123.500-83-198.400 0-43.500 9.800-85.200 29.100-124 18.800-37.900 46.800-71.800 80.800-97.900a349.600 349.600 0 0 0 58.600-56.800c25-30.500 44.600-64.500 58.200-101a240 240 0 0 0 12.100-46.500c24.100 22.200 44.300 49 61.200 80.400 33.400 62.600 48.800 118.300 45.800 165.700a74.010 74.010 0 0 0 24.400 59.800 73.360 73.360 0 0 0 53.400 18.800c19.700-1 37.800-9.700 51-24.400 13.300-14.900 24.800-30.100 34.400-45.600 14 17.900 25.700 37.400 35 58.400 15.900 35.800 24 73.900 24 113.100 0 74.900-29.500 145.400-83 198.400z"/></svg><span class="tx">志愿者管理</span><svg class="ar" viewBox="0 0 12 12"><path d="M2.500 4.300L6 7.700l3.500-3.400" fill="none" stroke="currentColor" stroke-width="1.500"/></svg></div>
  <div class="mi" style="top:343px"><svg class="ic" viewBox="0 0 1024 1024"><path fill="currentColor" d="M464 144H160c-8.800 0-16 7.200-16 16v304c0 8.800 7.200 16 16 16h304c8.800 0 16-7.200 16-16V160c0-8.800-7.200-16-16-16zm-52 268H212V212h200v200zm452-268H560c-8.800 0-16 7.200-16 16v304c0 8.800 7.200 16 16 16h304c8.800 0 16-7.200 16-16V160c0-8.800-7.200-16-16-16zm-52 268H612V212h200v200zM464 544H160c-8.800 0-16 7.200-16 16v304c0 8.800 7.200 16 16 16h304c8.800 0 16-7.200 16-16V560c0-8.800-7.200-16-16-16zm-52 268H212V612h200v200zm452-268H560c-8.800 0-16 7.200-16 16v304c0 8.800 7.200 16 16 16h304c8.800 0 16-7.200 16-16V560c0-8.800-7.200-16-16-16zm-52 268H612V612h200v200z"/></svg><span class="tx">系统管理</span><svg class="ar" viewBox="0 0 12 12"><path d="M2.500 4.300L6 7.700l3.500-3.400" fill="none" stroke="currentColor" stroke-width="1.500"/></svg></div>
</div>
</body>
</html>
